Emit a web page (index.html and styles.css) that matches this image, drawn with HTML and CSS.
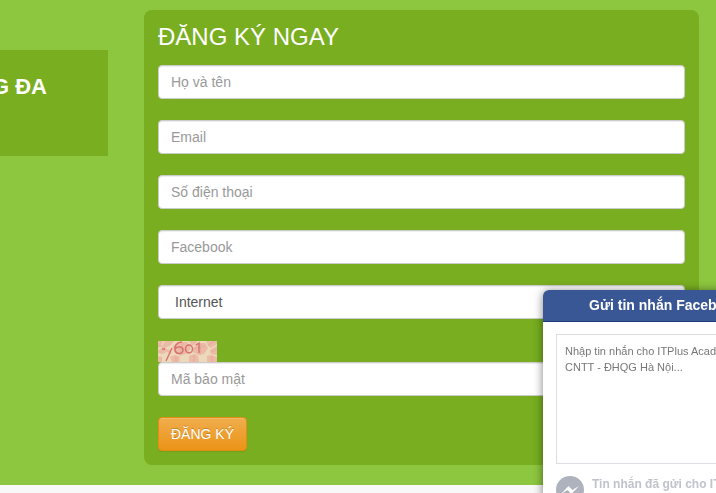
FILE: index.html
```html
<!DOCTYPE html>
<html lang="vi">
<head>
<meta charset="utf-8">
<meta name="viewport" content="width=device-width, initial-scale=1">
<title>Đăng ký ngay</title>
<link rel="stylesheet" href="styles.css">
</head>
<body>
<main class="signup">
  <section class="campus">
    <h2 class="campus-title">G ĐA</h2>
  </section>
  <form class="panel">
    <h1 class="panel-title">ĐĂNG KÝ NGAY</h1>
    <div class="fields">
      <input class="control" type="text" placeholder="Họ và tên" aria-label="Họ và tên">
      <input class="control" type="email" placeholder="Email" aria-label="Email">
      <input class="control" type="tel" placeholder="Số điện thoại" aria-label="Số điện thoại">
      <input class="control" type="text" placeholder="Facebook" aria-label="Facebook">
      <select class="control select" aria-label="Nguồn thông tin">
        <option>Internet</option>
      </select>
      <div class="captcha">
        <svg class="captcha-image" viewBox="0 0 59 21" role="img" aria-label="Mã bảo mật">
          <rect width="59" height="21" fill="#ecd9bb"/>
          <g fill="#ebbba6">
            <path d="M0 0h5L3 5 0 7zM7 0h9l-3 4-6 3-3-2zM15 5l5-4h9l4 5-3 6-8 3-6-4zM31 0h8l-1 3-4 2zM35 7l5-5h7l3 5-4 6-6 1-5-3zM48 0h11v3l-6 4-3-2zM52 9l7-4v9l-6-1zM0 9l5-2 7 2 2 4-5-2-5 2-4-1z"/>
            <path d="M0 15l4 1v5H0zM12 16l5-2 5 2-1 5h-7zM31 15l5-2 4 2 1 6H31zM49 15l4-1 6 2v5H49z"/>
          </g>
          <g fill="none" stroke="#e2a596" stroke-width=".7">
            <path d="M0 4l8 4M17 6l13 4M25 1l-3 13M36 8l11-3M43 2l-1 12M50 4l7-4M53 11l6-3M18 21v-6M36 21v-7M54 21v-6"/>
          </g>
          <g fill="none" stroke="#d86f70" stroke-width="1.400">
            <path d="M4 8h3M8 20l6-13M24 1c-5 0-8 4-7 8 1 5 8 4 8 0s-6-4-8-1"/>
            <ellipse cx="31" cy="8" rx="3.500" ry="4"/>
            <path d="m38 4 3-2v10"/>
          </g>
        </svg>
        <input class="control" type="text" placeholder="Mã bảo mật" aria-label="Mã bảo mật">
      </div>
      <button class="submit" type="submit">ĐĂNG KÝ</button>
    </div>
  </form>
</main>
<aside class="chat">
  <h2 class="chat-title">Gửi tin nhắn Facebook</h2>
  <div class="chat-body">
    <textarea class="chat-message" placeholder="Nhập tin nhắn cho ITPlus Academy - CNTT - ĐHQG Hà Nội..." aria-label="Tin nhắn"></textarea>
    <div class="chat-note">
      <svg class="chat-icon" viewBox="0 0 28 28" aria-hidden="true">
        <circle cx="14" cy="14" r="14" fill="#adb2bd"/>
        <path d="M5 18l7.500-8 4 4 6.500-4-7.500 8-4-4z" fill="#fff"/>
      </svg>
      <p class="chat-text">Tin nhắn đã gửi cho ITPlus sẽ xuất hiện ở Messenger</p>
    </div>
  </div>
</aside>
</body>
</html>
```
FILE: styles.css
```css
* {
  box-sizing: border-box;
}

body {
  margin: 0;
  min-height: 100vh;
  background: #f8f8f8;
  font-family: "Liberation Sans", Arial, sans-serif;
  font-size: 14px;
  line-height: 20px;
}

.signup {
  display: flex;
  align-items: flex-start;
  gap: 36px;
  padding: 10px 17px 20px 0;
  background: #8dc63f;
}

.campus {
  display: flex;
  justify-content: flex-end;
  flex: 0 0 108px;
  height: 106px;
  margin-top: 40px;
  padding: 24px 61px 0 0;
  overflow: hidden;
  background: #78ae20;
  color: #fff;
}

.campus-title {
  margin: 0;
  font-size: 22px;
  line-height: 26px;
  white-space: nowrap;
}

.panel {
  flex: 1;
  min-width: 0;
  padding: 14px;
  border-radius: 8px;
  background: #78ae20;
}

.panel-title {
  margin: 0 0 15px;
  color: #fff;
  font-size: 24px;
  font-weight: 400;
  line-height: 26px;
}

.fields {
  display: flex;
  flex-direction: column;
  align-items: stretch;
  gap: 21px;
}

.control {
  display: block;
  width: 100%;
  height: 34px;
  margin: 0;
  padding: 6px 12px;
  border: 1px solid #ccc;
  border-radius: 4px;
  background: #fff;
  box-shadow: inset 0 1px 1px rgba(0, 0, 0, 0.075);
  color: #555;
  font: inherit;
}

.control::placeholder {
  color: #999;
  opacity: 1;
}

.select {
  appearance: none;
  padding-left: 16px;
}

.captcha {
  padding-top: 1px;
}

.captcha-image {
  display: block;
  width: 59px;
  height: 21px;
}

.submit {
  align-self: flex-start;
  height: 34px;
  padding: 6px 12px;
  border: 1px solid #e38d13;
  border-radius: 4px;
  background: linear-gradient(#f0ad4e, #eb9316);
  box-shadow: inset 0 1px 0 rgba(255, 255, 255, 0.15), 0 1px 1px rgba(0, 0, 0, 0.075);
  color: #fff;
  font: inherit;
  text-shadow: 0 -1px 0 rgba(0, 0, 0, 0.2);
}

.chat {
  position: fixed;
  top: 290px;
  right: -77px;
  width: 250px;
  border-radius: 6px 6px 0 0;
  background: #fff;
  box-shadow: 0 1px 10px rgba(0, 0, 0, 0.5);
}

.chat-title {
  margin: 0;
  padding: 5px 0 6px 46px;
  border-bottom: 1px solid #1d3c78;
  border-radius: 6px 6px 0 0;
  background: #3a5795;
  color: #fff;
  font-size: 14px;
  line-height: 20px;
  white-space: nowrap;
}

.chat-body {
  padding: 12px 13px;
}

.chat-message {
  display: block;
  width: 100%;
  height: 130px;
  margin: 0 0 12px;
  padding: 8px;
  border: 1px solid #dcdee3;
  border-radius: 0;
  background: #fff;
  font: 11px/16px "Liberation Sans", Arial, sans-serif;
  resize: none;
}

.chat-message::placeholder {
  color: #777;
  opacity: 1;
}

.chat-note {
  display: flex;
  align-items: flex-start;
  gap: 8px;
}

.chat-icon {
  flex: none;
  width: 28px;
  height: 28px;
}

.chat-text {
  margin: 0;
  color: #bec3cc;
  font-size: 12px;
  font-weight: 700;
  line-height: 16px;
}
```
